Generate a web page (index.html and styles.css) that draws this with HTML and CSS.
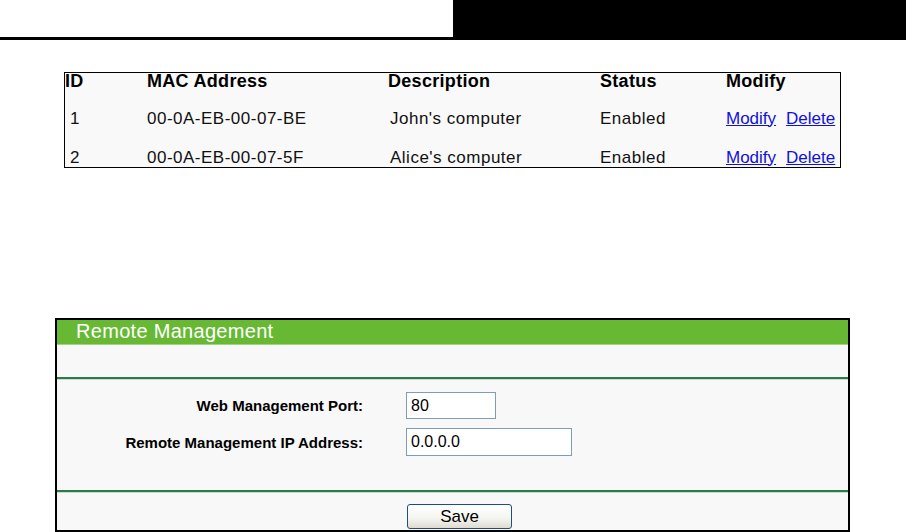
FILE: index.html
```html
<!DOCTYPE html>
<html>
<head>
<meta charset="utf-8">
<link rel="stylesheet" href="styles.css">
</head>
<body>
<div class="topbar"><div class="topbar-left"></div><div class="topbar-right"></div></div>

<div class="rules">
  <div class="row head">
    <span class="c-id">ID</span><span>MAC Address</span><span>Description</span><span>Status</span><span>Modify</span>
  </div>
  <div class="row data">
    <span class="c-id">1</span><span>00-0A-EB-00-07-BE</span><span class="c-desc">John's computer</span><span>Enabled</span><span class="c-mod"><a href="#">Modify</a><a href="#">Delete</a></span>
  </div>
  <div class="row data">
    <span class="c-id">2</span><span>00-0A-EB-00-07-5F</span><span class="c-desc">Alice's computer</span><span>Enabled</span><span class="c-mod"><a href="#">Modify</a><a href="#">Delete</a></span>
  </div>
</div>

<section class="panel">
  <div class="panel-title">Remote Management</div>
  <div class="panel-band"></div>
  <div class="panel-form">
    <div class="field"><label class="field-label">Web Management Port:</label><input class="in-port" type="text" value="80"></div>
    <div class="field"><label class="field-label">Remote Management IP Address:</label><input class="in-ip" type="text" value="0.0.0.0"></div>
  </div>
  <div class="panel-actions"><button class="btn-save" type="button">Save</button></div>
</section>
</body>
</html>
```
FILE: styles.css
```css
body {
  margin: 0;
  font-family: "Liberation Sans", Arial, sans-serif;
  background: #fff;
  color: #000;
}

.topbar {
  display: flex;
  height: 40px;
}
.topbar-left {
  width: 453px;
  box-sizing: border-box;
  border-bottom: 3px solid #000;
}
.topbar-right {
  flex: 1;
  background: #000;
}

.rules {
  margin: 32px 0 0 64px;
  width: 777px;
  height: 96px;
  box-sizing: border-box;
  border: 1px solid #000;
  background: #f9f9f9;
  overflow: hidden;
  font-size: 17px;
}
.row {
  display: grid;
  grid-template-columns: 82px 241px 212px 126px 1fr;
  align-items: center;
  white-space: nowrap;
}
.head {
  height: 14px;
  margin-top: -2px;
  margin-bottom: 14px;
  font-weight: bold;
  font-size: 18px;
  letter-spacing: 0.3px;
}
.data {
  height: 39px;
  letter-spacing: 0.5px;
  color: #111;
}
.data .c-id {
  padding-left: 5px;
}
.c-desc {
  padding-left: 2px;
}
.c-mod a {
  color: #1010e0;
  text-decoration: underline;
  letter-spacing: 0;
}
.c-mod a + a {
  margin-left: 10px;
}

.panel {
  margin: 150px 0 0 55px;
  width: 795px;
  box-sizing: border-box;
  border: 2px solid #000;
  background: #f8f8f8;
}
.panel-title {
  height: 24px;
  line-height: 22px;
  padding-left: 19px;
  background: #67b934;
  border-bottom: 1px solid #a3d386;
  color: #fff;
  font-size: 20px;
  letter-spacing: 0.3px;
}
.panel-band {
  height: 32px;
}
.panel-form {
  border-top: 2px solid #2d7a4c;
  box-shadow: inset 0 1px 0 #c8ddd0;
  padding: 13px 0 34px;
  display: flex;
  flex-direction: column;
  gap: 9px;
}
.field {
  display: flex;
  align-items: center;
}
.field-label {
  width: 306px;
  margin-right: 43px;
  text-align: right;
  font-weight: bold;
  font-size: 15px;
}
.field input {
  box-sizing: border-box;
  border: 1px solid #7f9db9;
  background: #fff;
  padding: 0 4px;
  font-family: "Liberation Sans", Arial, sans-serif;
  font-size: 16px;
  color: #000;
  margin: 0;
}
.in-port {
  width: 90px;
  height: 27px;
}
.in-ip {
  width: 166px;
  height: 28px;
}
.panel-actions {
  border-top: 2px solid #2d7a4c;
  box-shadow: inset 0 1px 0 #c8ddd0;
  padding: 12px 0 1px 350px;
}
.btn-save {
  display: block;
  width: 105px;
  height: 25px;
  margin: 0;
  padding: 0;
  border: 1px solid #1d4f80;
  border-radius: 3px;
  background: linear-gradient(#ffffff, #f4f4ef 60%, #dedad0);
  font-family: "Liberation Sans", Arial, sans-serif;
  font-size: 17px;
  color: #000;
}
```
